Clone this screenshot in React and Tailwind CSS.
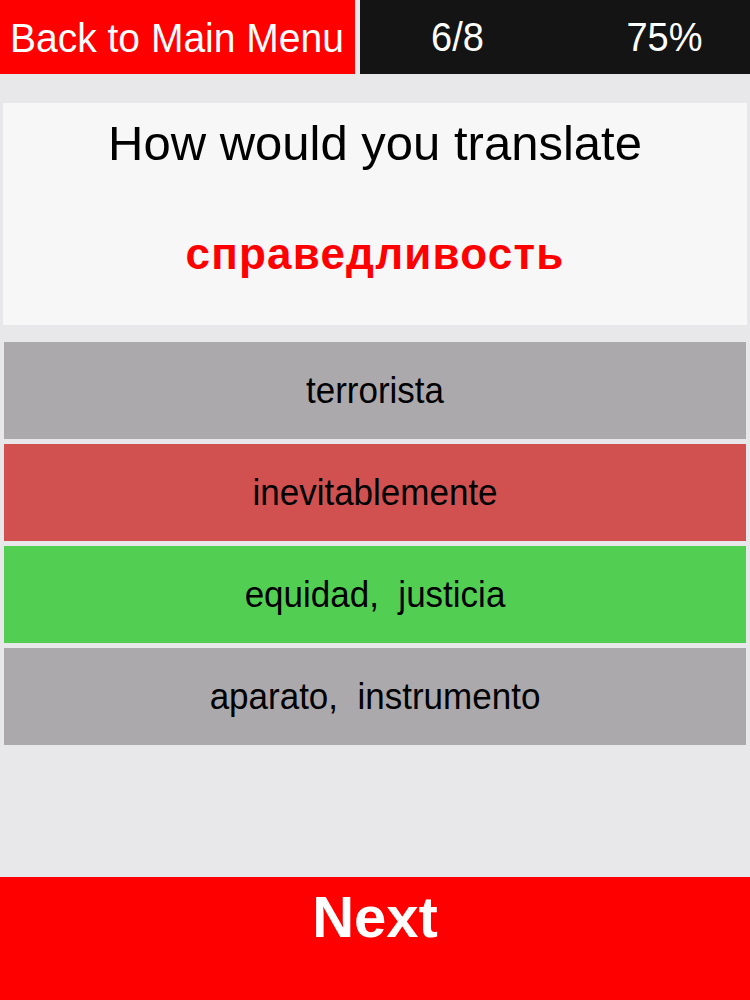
const options = [
  { label: "terrorista", bg: "bg-[#aba9ab]" },
  { label: "inevitablemente", bg: "bg-[#d15151]" },
  { label: "equidad,  justicia", bg: "bg-[#52cf53]" },
  { label: "aparato,  instrumento", bg: "bg-[#aba9ab]" },
];

export default function App() {
  return (
    <div
      className="h-[1000px] w-[750px] bg-[#e8e7e9] flex flex-col overflow-hidden"
      style={{ fontFamily: '"Liberation Sans", Arial, sans-serif' }}
    >
      {/* top bar */}
      <div className="flex h-[74px] gap-[5px]">
        <button className="w-[355px] bg-[#fe0000] text-white text-[39px] text-left pl-[10px] leading-none">
          <span className="inline-block scale-y-[1.06]">Back to Main Menu</span>
        </button>
        <div className="flex-1 bg-[#141414] text-white text-[38px] grid grid-cols-2 items-center leading-none">
          <span className="text-center scale-y-[1.06]">6/8</span>
          <span className="text-center pl-[24px] scale-y-[1.06]">75%</span>
        </div>
      </div>

      {/* question */}
      <div className="mt-[29px] mx-[3px] h-[222px] bg-[#f7f7f8] flex flex-col items-center">
        <div className="mt-[16px] text-[49px] text-black leading-none">How would you translate</div>
        <div className="mt-[64px] text-[44px] font-bold text-[#fe0000] leading-none tracking-[1.2px]">
          справедливость
        </div>
      </div>

      {/* answers */}
      <div className="mt-[17px] mx-[4px] flex flex-col gap-[5px]">
        {options.map((o) => (
          <div
            key={o.label}
            className={`${o.bg} h-[97px] flex items-center justify-center text-[35px] text-black whitespace-pre`}
          >
            <span className="inline-block scale-y-[1.08]">{o.label}</span>
          </div>
        ))}
      </div>

      <div className="flex-1" />

      {/* next */}
      <button className="h-[123px] bg-[#fe0000] text-white text-[58px] font-bold flex justify-center pt-[11px] leading-none">
        Next
      </button>
    </div>
  );
}
